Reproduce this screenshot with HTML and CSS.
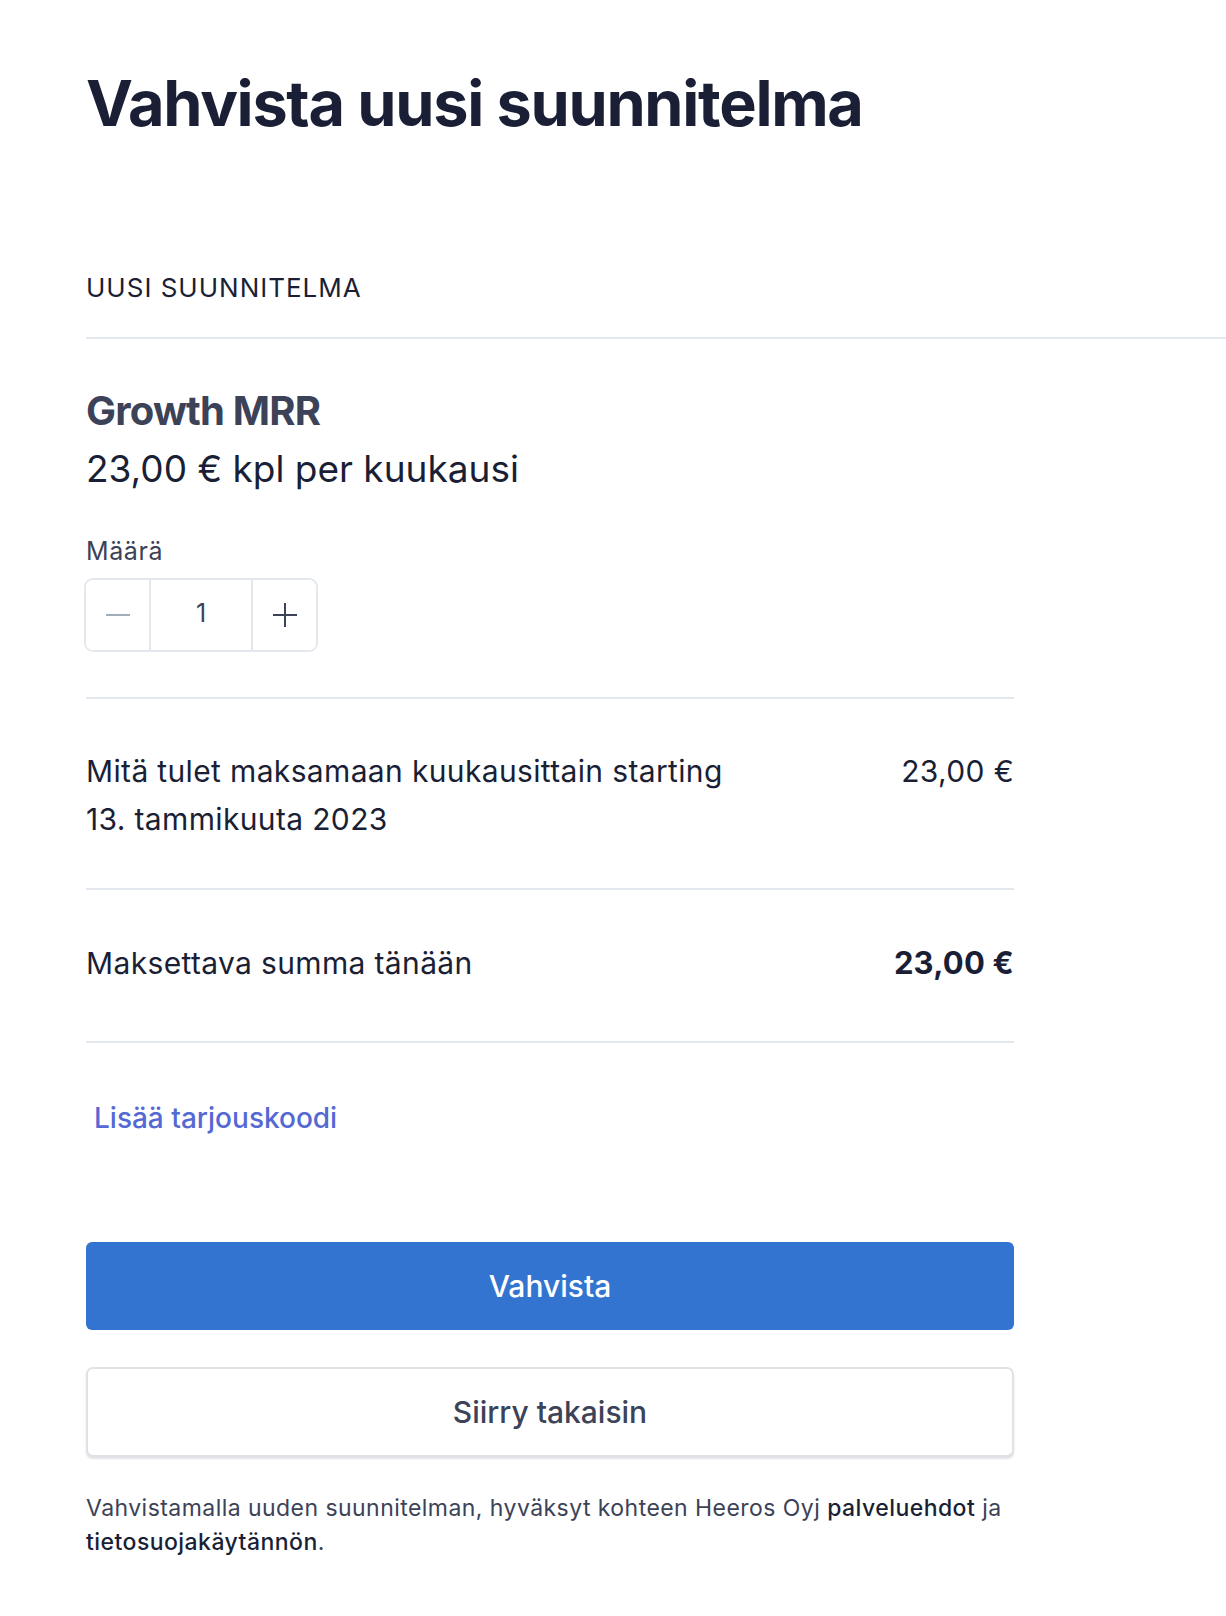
FILE: index.html
```html
<!DOCTYPE html>
<html lang="fi">
<head>
  <meta charset="UTF-8">
  <meta name="viewport" content="width=device-width, initial-scale=1.0">
  <title>Vahvista uusi suunnitelma</title>
  <link rel="stylesheet" href="styles.css">
</head>
<body>
  <div class="page">
    <h1 class="title">Vahvista uusi suunnitelma</h1>

    <div class="section-label">UUSI SUUNNITELMA</div>

    <div class="content">
      <div class="plan">
        <div class="plan-name">Growth MRR</div>
        <div class="plan-price">23,00 € kpl per kuukausi</div>
      </div>

      <div class="quantity">
        <label class="quantity-label" for="qty">Määrä</label>
        <div class="stepper">
          <button class="step-btn minus" type="button" aria-label="Vähennä">
            <svg width="24" height="24" viewBox="0 0 24 24"><path d="M0 12h24" stroke="#a3acb9" stroke-width="2"/></svg>
          </button>
          <input id="qty" class="step-input" type="text" value="1">
          <button class="step-btn plus" type="button" aria-label="Lisää">
            <svg width="24" height="24" viewBox="0 0 24 24"><path d="M0 12h24M12 0v24" stroke="#3c4257" stroke-width="2"/></svg>
          </button>
        </div>
      </div>

      <div class="summary-row">
        <div class="summary-text">Mitä tulet maksamaan kuukausittain starting<br>13. tammikuuta 2023</div>
        <div class="summary-amount">23,00 €</div>
      </div>

      <div class="summary-row total">
        <div class="summary-text">Maksettava summa tänään</div>
        <div class="summary-amount">23,00 €</div>
      </div>

      <button class="promo-link" type="button">Lisää tarjouskoodi</button>

      <div class="actions">
        <button class="btn-primary" type="button">Vahvista</button>
        <button class="btn-secondary" type="button">Siirry takaisin</button>
      </div>

      <p class="terms">Vahvistamalla uuden suunnitelman, hyväksyt kohteen Heeros Oyj <a href="#">palveluehdot</a> ja <a href="#">tietosuojakäytännön</a>.</p>
    </div>
  </div>
</body>
</html>
```

FILE: styles.css
```css
body {
  margin: 0;
  background-color: #fff;
  font-family: Inter, "Noto Sans", sans-serif;
  color: #1a1f36;
}
.page {
  padding: 65px 0 40px 86px;
}
.title {
  margin: 0;
  font-size: 63px;
  line-height: 76px;
  font-weight: 700;
  letter-spacing: -1.3px;
  color: #1a1f36;
}
.section-label {
  margin-top: 131px;
  padding-bottom: 33px;
  border-bottom: 2px solid #e3e8ee;
  font-size: 26px;
  line-height: 32px;
  letter-spacing: 1px;
  color: #1a1f36;
}
.content {
  width: 928px;
}
.plan {
  padding-top: 48px;
}
.plan-name {
  font-size: 40px;
  line-height: 48px;
  font-weight: 700;
  letter-spacing: -0.8px;
  color: #3c4257;
}
.plan-price {
  margin-top: 11px;
  font-size: 37px;
  line-height: 46px;
  color: #1a1f36;
}
.quantity {
  margin-top: 45px;
  padding-bottom: 45px;
  border-bottom: 2px solid #e3e8ee;
}
.quantity-label {
  display: block;
  font-size: 25px;
  line-height: 28px;
  letter-spacing: 0.6px;
  color: #3c4257;
}
.stepper {
  display: inline-flex;
  margin-top: 13px;
  margin-left: -2px;
  height: 74px;
  border: 2px solid #e3e8ee;
  border-radius: 9px;
  box-sizing: border-box;
  overflow: hidden;
}
.step-btn {
  width: 63px;
  padding: 0;
  border: none;
  background: #fff;
  display: flex;
  align-items: center;
  justify-content: center;
}
.step-input {
  width: 100px;
  border: none;
  border-left: 2px solid #e3e8ee;
  border-right: 2px solid #e3e8ee;
  font-family: inherit;
  font-size: 25px;
  text-align: center;
  color: #3c4257;
  padding: 0 0 4px;
  outline: none;
}
.summary-row {
  display: flex;
  justify-content: space-between;
  align-items: flex-start;
  padding: 48px 0 45px;
  border-bottom: 2px solid #e3e8ee;
  font-size: 30px;
  line-height: 48px;
  letter-spacing: 0.35px;
}
.summary-row.total {
  padding: 49px 0 54px;
}
.summary-text {
  color: #1a1f36;
}
.summary-amount {
  color: #1a1f36;
}
.total .summary-amount {
  font-size: 31px;
  font-weight: 700;
  letter-spacing: 0.2px;
}
.promo-link {
  display: block;
  margin-top: 58px;
  padding: 0 8px;
  border: none;
  background: none;
  font-family: inherit;
  font-size: 28px;
  line-height: 34px;
  font-weight: 500;
  color: #5469d4;
}
.actions {
  display: flex;
  flex-direction: column;
  gap: 37px;
  margin-top: 107px;
}
.btn-primary {
  height: 88px;
  border: none;
  border-radius: 6px;
  background-color: #3374d0;
  color: #fff;
  font-family: inherit;
  font-size: 30px;
  font-weight: 500;
}
.btn-secondary {
  height: 90px;
  border: 2px solid #e0e2e7;
  border-radius: 7px;
  background-color: #fff;
  color: #3c4257;
  font-family: inherit;
  font-size: 30px;
  font-weight: 500;
  box-shadow: 0 2px 2px rgba(60, 66, 87, 0.16);
}
.terms {
  margin: 34px 0 0;
  font-size: 23px;
  line-height: 34px;
  letter-spacing: 0.45px;
  color: #3c4257;
}
.terms a {
  color: #1a1f36;
  font-weight: 500;
  text-decoration: none;
}
```
